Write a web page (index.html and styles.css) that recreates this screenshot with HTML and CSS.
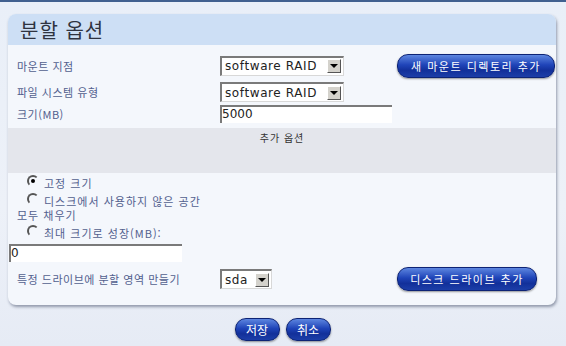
FILE: index.html
```html
<!DOCTYPE html>
<html lang="ko">
<head>
	<meta charset="UTF-8">
	<title>분할 옵션</title>
	<link rel="stylesheet" href="styles.css">
</head>
<body>
	<div class="topline"></div>
	<div class="card">
		<div class="card-head">분할 옵션</div>
		<div class="form-row row-mount">
			<span class="label">마운트 지점</span>
			<div class="fake-select wide"><span class="val">software RAID</span><span class="arrow"></span></div>
			<a href="javascript:;" class="btn btn-wide">새 마운트 디렉토리 추가</a>
		</div>
		<div class="form-row row-fs">
			<span class="label">파일 시스템 유형</span>
			<div class="fake-select wide"><span class="val">software RAID</span><span class="arrow"></span></div>
		</div>
		<div class="form-row row-size">
			<span class="label">크기(MB)</span>
			<div class="fake-input size-input">5000</div>
		</div>
		<div class="extra-band">추가 옵션</div>
		<div class="radios">
			<div class="radio-line"><span class="radio on"></span>고정 크기</div>
			<div class="radio-line"><span class="radio"></span>디스크에서 사용하지 않은 공간</div>
			<div class="radio-wrap">모두 채우기</div>
			<div class="radio-line"><span class="radio"></span>최대 크기로 성장(MB):</div>
			<div class="fake-input grow-input">0</div>
		</div>
		<div class="form-row row-drive">
			<span class="label">특정 드라이브에 분할 영역 만들기</span>
			<div class="fake-select small"><span class="val">sda</span><span class="arrow"></span></div>
			<a href="javascript:;" class="btn btn-disk">디스크 드라이브 추가</a>
		</div>
	</div>
	<div class="actions">
		<a href="javascript:;" class="btn btn-small">저장</a>
		<a href="javascript:;" class="btn btn-small">취소</a>
	</div>
</body>
</html>
```

FILE: styles.css
```css
* {
	margin: 0;
	padding: 0;
	box-sizing: border-box;
	text-decoration: none;
}
body {
	width: 566px;
	height: 346px;
	overflow: hidden;
	background: linear-gradient(#e9eff8, #edf1f8 60%, #e6ebf5);
	font-family: "Noto Sans CJK KR", "DejaVu Sans", sans-serif;
	font-size: 11px;
	color: #52608e;
}
.topline {
	height: 2px;
	background: #41608f;
}
.card {
	margin: 12px 10px 0 8px;
	height: 291px;
	border-radius: 8px;
	background: #f4f7fc;
	box-shadow: 1px 2px 3px rgba(40, 50, 80, 0.45);
	overflow: hidden;
}
.card-head {
	height: 31px;
	background: #cddff5;
	padding-left: 12px;
	font-size: 20px;
	line-height: 31px;
	color: #2f3340;
	letter-spacing: 1px;
}
.form-row {
	display: flex;
	align-items: center;
	padding-left: 9px;
}
.form-row .label {
	width: 203px;
	flex-shrink: 0;
	letter-spacing: 0.5px;
}
.row-mount {
	height: 31px;
	margin-top: 5px;
}
.row-fs {
	height: 22px;
}
.row-size {
	height: 22px;
}
.fake-select {
	display: flex;
	align-items: center;
	height: 20px;
	background: #fff;
	border-top: 2px solid #7a7a7a;
	border-left: 2px solid #7a7a7a;
	border-right: 1px solid #d8d8d8;
	border-bottom: 1px solid #d8d8d8;
	font-family: "DejaVu Sans", sans-serif;
	font-size: 12px;
	color: #222;
	letter-spacing: 0.6px;
}
.fake-select .val {
	flex: 1;
	padding-left: 3px;
}
.fake-select .arrow {
	width: 14px;
	height: 14px;
	margin-right: 2px;
	background: #d4d2cc;
	border-top: 1px solid #fff;
	border-left: 1px solid #fff;
	border-right: 1px solid #555;
	border-bottom: 1px solid #555;
	position: relative;
}
.fake-select .arrow:after {
	content: "";
	position: absolute;
	left: 2px;
	top: 4px;
	border-left: 4px solid transparent;
	border-right: 4px solid transparent;
	border-top: 4px solid #000;
}
.wide {
	width: 124px;
}
.small {
	width: 52px;
}
.fake-input {
	height: 18px;
	background: #fff;
	border-top: 2px solid #7a7a7a;
	border-left: 2px solid #7a7a7a;
	font-family: "DejaVu Sans", sans-serif;
	font-size: 12px;
	line-height: 15px;
	color: #222;
	padding-left: 0;
}
.size-input {
	width: 172px;
}
.extra-band {
	margin-top: 3px;
	height: 45px;
	background: #e4e6ec;
	text-align: center;
	color: #333;
	font-size: 10px;
	padding-top: 2px;
	letter-spacing: 1px;
}
.radios {
	padding-top: 1px;
	height: 91px;
	letter-spacing: 1px;
}
.radio-line {
	display: flex;
	align-items: center;
	height: 18px;
	padding-left: 19px;
}
.radio-wrap {
	height: 14px;
	line-height: 10px;
	padding-left: 9px;
}
.radio {
	width: 12px;
	height: 12px;
	border-radius: 50%;
	border: 2px solid #555;
	border-right-color: transparent;
	border-bottom-color: transparent;
	margin-right: 5px;
	margin-top: -5px;
	position: relative;
}
.radio.on:after {
	content: "";
	position: absolute;
	left: 2px;
	top: 2px;
	width: 4px;
	height: 4px;
	border-radius: 50%;
	background: #000;
}
.grow-input {
	width: 173px;
	margin-left: 1px;
	margin-top: 2px;
}
.row-drive {
	height: 30px;
	margin-top: 0;
}
.btn {
	display: inline-block;
	height: 24px;
	line-height: 22px;
	border-radius: 11px;
	background: linear-gradient(#5d86e0, #1f44b8 45%, #12309a 70%, #1c3ea8);
	border: 1px solid #0d2375;
	box-shadow: 0 1px 2px rgba(0, 0, 0, 0.4);
	color: #fff;
	font-size: 11px;
	text-align: center;
	letter-spacing: 1.5px;
}
.btn-wide {
	width: 158px;
	margin-left: 53px;
}
.btn-disk {
	width: 140px;
	margin-left: 125px;
}
.actions {
	display: flex;
	justify-content: center;
	gap: 6px;
	margin-top: 13px;
	padding-right: 1px;
}
.btn-small {
	width: 45px;
	height: 23px;
	font-size: 12px;
	letter-spacing: 0;
}
```
